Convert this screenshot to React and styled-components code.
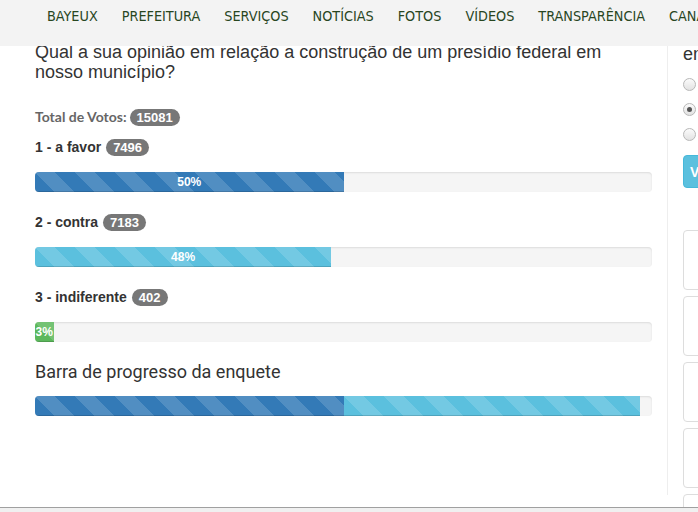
import React from 'react';
import styled, { createGlobalStyle } from 'styled-components';

const GlobalStyle = createGlobalStyle`
  html, body {
    margin: 0;
    padding: 0;
    overflow: hidden;
    background: #fff;
  }
  body {
    font-family: "Liberation Sans", Arial, sans-serif;
    color: #333;
  }
`

const Page = styled.div`
  height: 512px;
  display: flex;
  flex-direction: column;
`

const TopNav = styled.nav`
  position: fixed;
  top: 0;
  left: 0;
  right: 0;
  height: 46px;
  background: #f3f3f3;
  display: flex;
  gap: 24px;
  padding-left: 47px;
  white-space: nowrap;
  overflow: hidden;
  z-index: 10;
`

const NavItem = styled.a`
  padding-top: 7px;
  font-family: "Liberation Sans Narrow", "DejaVu Sans Condensed", sans-serif;
  font-size: 14.3px;
  line-height: 18px;
  color: #28461f;
  text-decoration: none;
`

const Row = styled.div`
  flex: 1;
  display: flex;
  overflow: hidden;
`

const Poll = styled.section`
  flex: none;
  width: 617px;
  height: 453px;
  margin-left: 35px;
  padding: 42px 15px 0 0;
  border-right: 1px solid #eee;
`

const Question = styled.h3`
  margin: 0 0 25px;
  font-size: 18px;
  font-weight: normal;
  line-height: 20px;
  color: #333;
`

const Total = styled.div`
  display: flex;
  align-items: center;
  gap: 3px;
  margin-bottom: 10px;
  font-family: Lato, sans-serif;
  font-weight: bold;
  font-size: 14px;
  line-height: 20px;
  color: #666;
`

const Badge = styled.span`
  display: inline-block;
  padding: 3px 7px;
  border-radius: 10px;
  background: #777;
  color: #fff;
  font-family: "Liberation Sans", Arial, sans-serif;
  font-size: 13px;
  font-weight: bold;
  line-height: 11px;
`

const OptionLabel = styled.h5`
  display: flex;
  align-items: center;
  gap: 5px;
  margin: 0 0 15px;
  font-size: 14px;
  font-weight: bold;
  line-height: 20px;
  color: #333;
`

const Heading = styled.h4`
  margin: 0 0 15px;
  font-family: Roboto, sans-serif;
  font-size: 18px;
  font-weight: normal;
  line-height: 19px;
  color: #333;
`

const Track = styled.div`
  display: flex;
  height: 20px;
  margin-bottom: 20px;
  border-radius: 4px;
  overflow: hidden;
  background: #f5f5f5;
  box-shadow: inset 0 1px 2px rgba(0, 0, 0, 0.1);
`

const Fill = styled.div`
  flex: none;
  height: 100%;
  background-color: ${p => p.$color};
  background-image: linear-gradient(
    45deg,
    rgba(255, 255, 255, 0.15) 25%,
    transparent 25%,
    transparent 50%,
    rgba(255, 255, 255, 0.15) 50%,
    rgba(255, 255, 255, 0.15) 75%,
    transparent 75%,
    transparent
  );
  background-size: 40px 40px;
  box-shadow: inset 0 -1px 0 rgba(0, 0, 0, 0.15);
  color: #fff;
  font-size: 12px;
  font-weight: bold;
  line-height: 20px;
  text-align: center;
  white-space: nowrap;
`

const Side = styled.aside`
  flex: none;
  width: 300px;
  padding: 44px 0 0 15px;
`

const SideQuestion = styled.div`
  font-size: 18px;
  line-height: 20px;
  color: #333;
  white-space: nowrap;
  margin-bottom: 8px;
`

const Choice = styled.label`
  display: flex;
  align-items: center;
  gap: 6px;
  height: 25px;
  font-size: 14px;
  white-space: nowrap;
`

const RadioDot = styled.span`
  position: relative;
  flex: none;
  width: 11px;
  height: 11px;
  border-radius: 50%;
  border: 1px solid #b8b8b8;
  background: linear-gradient(#fbfbfb, #e2e2e2);

  &::after {
    content: '';
    display: ${p => (p.$checked ? 'block' : 'none')};
    position: absolute;
    left: 3px;
    top: 3px;
    width: 5px;
    height: 5px;
    border-radius: 50%;
    background: #555;
  }
`

const VoteButton = styled.button`
  display: block;
  margin-top: 8px;
  height: 33px;
  padding: 0 6px;
  border: 1px solid #46b8da;
  border-radius: 4px;
  background: #5bc0de;
  color: #fff;
  font-family: "Liberation Sans", Arial, sans-serif;
  font-size: 14px;
  font-weight: bold;
`

const Panels = styled.div`
  margin-top: 42px;
`

const Panel = styled.div`
  height: 60px;
  box-sizing: border-box;
  margin-bottom: 6px;
  border: 1px solid #ddd;
  border-radius: 4px;
  background: #fff;
`

const BottomStrip = styled.div`
  flex: none;
  height: 4px;
  border-top: 1px solid #a0a0a0;
  background: #f0f0f0;
`

const menu = ['BAYEUX', 'PREFEITURA', 'SERVIÇOS', 'NOTÍCIAS', 'FOTOS', 'VÍDEOS', 'TRANSPARÊNCIA', 'CANAIS']

const total = 15081

const options = [
  { label: '1 - a favor', votes: 7496, color: '#337ab7' },
  { label: '2 - contra', votes: 7183, color: '#5bc0de' },
  { label: '3 - indiferente', votes: 402, color: '#5cb85c' },
]

const pct = votes => Math.round((votes / total) * 100)

const App = () => {
  return (
    <Page>
      <GlobalStyle />

      <TopNav>
        {menu.map(item => (
          <NavItem key={item} href="#">{item}</NavItem>
        ))}
      </TopNav>

      <Row>
        <Poll>
          <Question>
            Qual a sua opinião em relação a construção de um presídio federal em nosso município?
          </Question>

          <Total>
            Total de Votos: <Badge>{total}</Badge>
          </Total>

          {options.map(opt => (
            <React.Fragment key={opt.label}>
              <OptionLabel>
                {opt.label} <Badge>{opt.votes}</Badge>
              </OptionLabel>
              <Track>
                <Fill $color={opt.color} style={{ width: `${pct(opt.votes)}%` }}>
                  {pct(opt.votes)}%
                </Fill>
              </Track>
            </React.Fragment>
          ))}

          <Heading>Barra de progresso da enquete</Heading>
          <Track>
            {options.slice(0, 2).map(opt => (
              <Fill key={opt.label} $color={opt.color} style={{ width: `${pct(opt.votes)}%` }} />
            ))}
          </Track>
        </Poll>

        <Side>
          <SideQuestion>em relação a construção</SideQuestion>
          <Choice><RadioDot /> a favor</Choice>
          <Choice><RadioDot $checked /> contra</Choice>
          <Choice><RadioDot /> indiferente</Choice>
          <VoteButton>Votar</VoteButton>

          <Panels>
            <Panel />
            <Panel />
            <Panel />
            <Panel />
            <Panel />
          </Panels>
        </Side>
      </Row>

      <BottomStrip />
    </Page>
  )
}

export default App;
